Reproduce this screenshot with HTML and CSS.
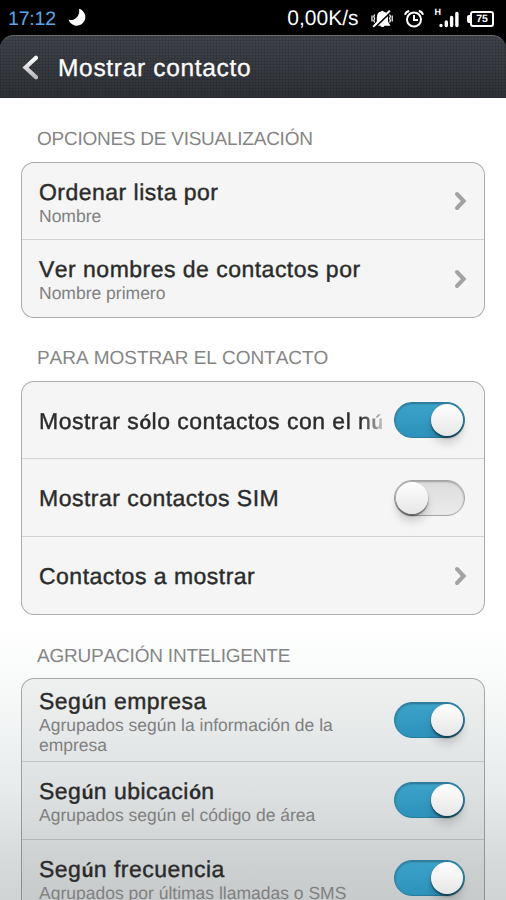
FILE: index.html
```html
<!DOCTYPE html>
<html lang="es">
<head>
<meta charset="utf-8">
<title>Mostrar contacto</title>
<link rel="stylesheet" href="styles.css">
</head>
<body>
<div class="status">
  <span class="clock">17:12</span>
  <svg class="moon" width="18" height="18" viewBox="0 0 18 18"><path d="M11 .8A8.600 8.600 0 1 1 .5 11.600C6 13.500 12.500 8 11 .8Z" fill="#fff"/></svg>
  <span class="speed">0,00K/s</span>
  <svg class="mute" width="22" height="18" viewBox="0 0 22 18"><path d="M3.200 15 5.800 11.500V8C5.800 4 7.600 2 10 1.600 10.500.4 12 .4 12.500 1.600 15.400 2.200 17 4.500 17 8V11.500L19.500 15.800H13.500C13 17.400 10 17.400 9.500 15.800H3.200Z" fill="#fff"/><path d="M3 18.200 20.500 1.400" stroke="#000" stroke-width="2"/><path d="M2.200 16.800 18.800 .8" stroke="#fff" stroke-width="2"/><path d="M3.600 4.500 2.800 6.500l.8 2-.8 2 .8 2M1 5.500v6M18.600 4.500l.8 2-.8 2 .8 2-.8 2M21.200 5.500v6" fill="none" stroke="#fff" stroke-width="1.200"/></svg>
  <svg class="alarm" width="20" height="18" viewBox="0 0 20 18"><circle cx="10" cy="9.500" r="7" fill="none" stroke="#fff" stroke-width="2"/><path d="M10 5v5h4M1 4.800C1.600 2.600 3 1.400 5.200 1M19 4.800C18.400 2.600 17 1.400 14.800 1" fill="none" stroke="#fff" stroke-width="2"/></svg>
  <span class="signal"><span class="net">H</span><svg width="21" height="18" viewBox="0 0 21 18"><path d="M3 15.500v.1M8.300 12v3.600M13.600 7.500v8.100M18.900 3.500v12.100" stroke="#fff" stroke-width="3.400" stroke-linecap="round"/></svg></span>
  <span class="battery"><span class="tip"></span><span class="cell">75</span></span>
</div>
<header class="bar">
  <svg class="back" width="18" height="26" viewBox="0 0 18 26"><defs><linearGradient id="g" x1="0" y1="0" x2="0" y2="1"><stop offset="0" stop-color="#fff"/><stop offset="1" stop-color="#b9b9bb"/></linearGradient></defs><path d="M16 2.800 5.500 12.500 16 22.300" fill="none" stroke="url(#g)" stroke-width="4.200" stroke-linecap="round"/></svg>
  <h1>Mostrar contacto</h1>
</header>
<main>
  <h2 class="s1">OPCIONES DE VISUALIZACIÓN</h2>
  <section class="card">
    <div class="row"><div class="text"><div class="title">Ordenar lista por</div><div class="sub">Nombre</div></div><svg class="chev" width="14" height="20" viewBox="0 0 14 20"><path d="M3 3 9.700 10 3 17"/></svg></div>
    <div class="row"><div class="text"><div class="title">Ver nombres de contactos por</div><div class="sub">Nombre primero</div></div><svg class="chev" width="14" height="20" viewBox="0 0 14 20"><path d="M3 3 9.700 10 3 17"/></svg></div>
  </section>
  <h2 class="s2">PARA MOSTRAR EL CONTACTO</h2>
  <section class="card">
    <div class="row"><div class="text"><div class="title fade">Mostrar s<b>ó</b>lo contactos con el n<b>ú</b></div></div><span class="toggle on"><i></i></span></div>
    <div class="row"><div class="text"><div class="title">Mostrar contactos SIM</div></div><span class="toggle"><i></i></span></div>
    <div class="row"><div class="text"><div class="title">Contactos a mostrar</div></div><svg class="chev" width="14" height="20" viewBox="0 0 14 20"><path d="M3 3 9.700 10 3 17"/></svg></div>
  </section>
  <h2 class="s3">AGRUPACIÓN INTELIGENTE</h2>
  <section class="card">
    <div class="row tall"><div class="text"><div class="title">Seg<b>ú</b>n empresa</div><div class="sub">Agrupados según la información de la empresa</div></div><span class="toggle on"><i></i></span></div>
    <div class="row"><div class="text"><div class="title">Seg<b>ú</b>n ubicaci<b>ó</b>n</div><div class="sub">Agrupados según el código de área</div></div><span class="toggle on raised"><i></i></span></div>
    <div class="row"><div class="text"><div class="title">Seg<b>ú</b>n frecuencia</div><div class="sub">Agrupados por últimas llamadas o SMS</div></div><span class="toggle on raised"><i></i></span></div>
  </section>
</main>
</body>
</html>
```
FILE: styles.css
```css
* { box-sizing: border-box; }
html { background: #000; }
body {
  margin: 0;
  width: 506px;
  height: 900px;
  overflow: hidden;
  display: flex;
  flex-direction: column;
  font-family: "Liberation Sans", Arial, sans-serif;
  font-kerning: none;
  text-rendering: geometricPrecision;
  background: #000;
}
.status {
  height: 35px;
  flex: none;
  display: flex;
  align-items: center;
  padding: 2px 12px 0 8px;
  color: #fff;
}
.clock { color: #5ba5e8; font-size: 19.5px; letter-spacing: -.2px; padding-top: 1px; }
.moon { margin: -3px 0 0 12px; }
.speed { margin-left: auto; font-size: 21px; }
.mute { margin-left: 12px; }
.alarm { margin-left: 11px; }
.signal { display: flex; margin-left: 11px; }
.net { font-size: 9px; font-weight: bold; line-height: 9px; margin: -2px -3px 0 0; }
.battery { display: flex; align-items: center; margin-left: 8px; }
.tip { width: 3px; height: 8px; background: #fff; border-radius: 2px 0 0 2px; }
.cell {
  width: 24px;
  height: 16px;
  border: 2px solid #fff;
  border-radius: 3px;
  font-size: 10.5px;
  font-weight: bold;
  line-height: 13px;
  text-align: center;
}
.bar {
  height: 63px;
  flex: none;
  display: flex;
  align-items: center;
  padding: 2px 0 0 20px;
  border-top: 1px solid #67696d;
  border-radius: 14px 14px 0 0;
  background:
    repeating-linear-gradient(90deg, rgba(0,0,0,.1) 0 1px, transparent 1px 3px),
    repeating-linear-gradient(0deg, rgba(0,0,0,.1) 0 1px, transparent 1px 3px),
    linear-gradient(#3f434a, #2f3237);
}
h1 {
  margin: 1px 0 0 20px;
  font-size: 24.5px;
  font-weight: normal;
  letter-spacing: .68px;
  color: #fff;
  -webkit-text-stroke: .3px #fff;
}
main {
  flex: 1;
  min-height: 0;
  overflow: hidden;
  padding: 0 21px;
  background: linear-gradient(#fff 0, #fff 530px, #f6f8f8 602px, #e7ebeb 692px, #d6dadb 762px, #d0d4d5 802px);
}
h2 {
  margin: 0 0 11px;
  padding: 30px 16px 0;
  font-size: 19px;
  line-height: 22px;
  font-weight: normal;
  color: #858585;
}
.s1 { padding-top: 31px; letter-spacing: -.25px; }
.s2 { letter-spacing: -.05px; }
.s3 { letter-spacing: -.2px; }
.s3 { padding-top: 31px; margin-bottom: 10px; }
.card {
  border: 1px solid rgba(0,0,0,.3);
  border-radius: 13px;
  background: rgba(0,0,0,.04);
}
.row {
  height: 78px;
  display: flex;
  align-items: center;
  padding: 0 19px 0 17px;
}
.row:first-child { height: 76px; }
.row.tall:first-child { height: 82px; }
.row + .row { border-top: 1px solid rgba(0,0,0,.14); }
.text { flex: 1; min-width: 0; margin-right: 12px; padding-top: 1px; }
.title {
  font-size: 23px;
  line-height: 26px;
  letter-spacing: .48px;
  white-space: nowrap;
  color: #2b2b2b;
  -webkit-text-stroke: .4px #2b2b2b;
}
.title b { font-size: 20px; line-height: 20px; letter-spacing: .2px; -webkit-text-stroke: 0; }
.fade {
  -webkit-mask-image: linear-gradient(90deg, #000 calc(100% - 20px), rgba(0,0,0,.25));
  mask-image: linear-gradient(90deg, #000 calc(100% - 20px), rgba(0,0,0,.25));
}
.sub { font-size: 17.5px; line-height: 20px; padding-top: 1px; margin-bottom: -1px; color: #808080; }
.chev { flex: none; margin-right: -3px; }
.chev path { fill: none; stroke: #a3a3a3; stroke-width: 4; stroke-linecap: round; }
.toggle {
  flex: none;
  width: 71px;
  height: 36px;
  padding: 1px;
  display: flex;
  border-radius: 18px;
  border: 1px solid #a5a5a5;
  background: linear-gradient(#dcdcdc, #ebebeb);
  box-shadow: inset 0 1px 2px rgba(0,0,0,.3);
}
.toggle i {
  width: 32px;
  height: 32px;
  border-radius: 50%;
  background: linear-gradient(#fff, #e6e6e6);
  box-shadow: 0 2px 2px rgba(0,0,0,.5), 0 8px 8px rgba(0,0,0,.15);
}
.toggle.on {
  justify-content: flex-end;
  border-color: #2b7c9f;
  background: linear-gradient(#3da2c8, #2d93bc);
}
.toggle.raised { margin-bottom: 2px; }
```
